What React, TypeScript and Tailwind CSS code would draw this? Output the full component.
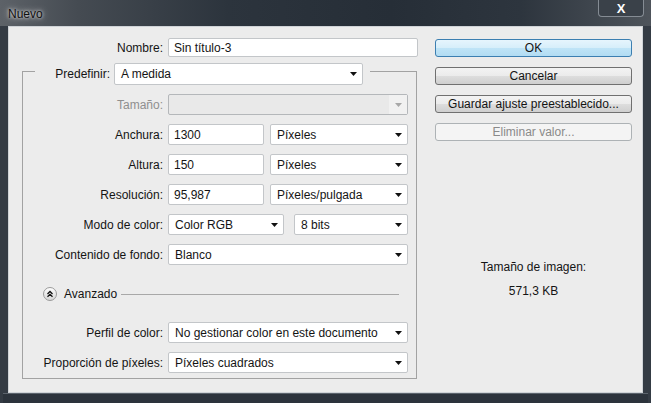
import React from "react";

const Arrow = ({ disabled }: { disabled?: boolean }) => (
  <svg width="7" height="4" viewBox="0 0 7 4" className="flex-none">
    <path d="M0 0 L7 0 L3.5 4 Z" fill={disabled ? "#a8a8a8" : "#111"} />
  </svg>
);

const Select = ({ text, w }: { text: string; w: string }) => (
  <div className={`${w} h-[21px] flex-none flex items-center justify-between bg-white border border-[#c3c6c9] rounded-[2px] pl-[6px] pr-[5px]`}>
    <span>{text}</span>
    <Arrow />
  </div>
);

const Input = ({ text, w }: { text: string; w: string }) => (
  <div className={`${w} h-[21px] flex-none flex items-center bg-white border border-[#c3c6c9] rounded-[2px] pl-[5px]`}>
    <span>{text}</span>
  </div>
);

const Row = ({ label, children, disabled, mt = "mt-[9px]" }: { label: string; children: React.ReactNode; disabled?: boolean; mt?: string }) => (
  <div className={`flex items-center gap-[5px] h-[21px] ${mt}`}>
    <div className={`w-[140px] text-right ${disabled ? "text-[#8f8f8f]" : ""}`}>{label}</div>
    {children}
  </div>
);

const Btn = ({ text, kind }: { text: string; kind: "ok" | "normal" | "disabled" }) => {
  const cls =
    kind === "ok"
      ? "bg-[linear-gradient(#e6f5fd_0%,#d6eefa_50%,#bfe4f7_51%,#b2dcf3_100%)] border-[#3c7fb1]"
      : kind === "normal"
      ? "bg-[linear-gradient(#f3f3f3_0%,#ebebeb_50%,#dddddd_51%,#cfcfcf_100%)] border-[#707070]"
      : "bg-[#f4f4f4] border-[#adb2b5] text-[#8a8a8a]";
  return (
    <div className={`h-[18px] w-[197px] flex items-center justify-center border rounded-[3px] ${cls}`}>{text}</div>
  );
};

export default function App() {
  return (
    <div
      className="w-[651px] h-[403px] flex flex-col bg-[#343b44] text-[12px] leading-none text-[#141414] overflow-hidden"
      style={{ fontFamily: '"Liberation Sans", Arial, sans-serif' }}
    >
      {/* title bar */}
      <div className="h-[26px] flex-none flex items-start bg-[linear-gradient(90deg,#5d6268_0%,#454b52_12%,#2c343d_35%,#262e37_60%,#2d353e_80%,#4e545b_100%)]">
        <div className="ml-[8px] mt-[8px] text-[12px] text-[#101010] [text-shadow:0_0_6px_rgba(235,235,235,0.9),0_0_3px_rgba(235,235,235,0.9)]">
          Nuevo
        </div>
        <div className="ml-auto mr-[7px] w-[46px] h-[17px] border border-t-0 border-[#858c94] rounded-b-[4px] bg-[#3a4149] flex items-center justify-center text-white font-bold text-[13px]">
          X
        </div>
      </div>

      {/* content */}
      <div className="mx-[8px] h-[367px] flex-none flex bg-[#ececec] border border-[#cfd3d7]">
        {/* left column */}
        <div className="w-[409px] flex-none pl-[13px] pt-[11px] flex flex-col">
          <div className="flex items-center gap-[5px] h-[19px]">
            <div className="w-[141px] text-right">Nombre:</div>
            <div className="w-[250px] h-[19px] flex items-center bg-white border border-[#c3c6c9] rounded-[2px] pl-[5px]">
              Sin título-3
            </div>
          </div>

          <div className="w-[395px] mt-[14px] border border-[#a2a2a2] flex flex-col pb-[5px]">
            <div className="-mt-[9px] ml-[12px] self-start flex items-center gap-[4px] bg-[#ececec] pr-[7px]">
              <div className="w-[75px] text-right">Predefinir:</div>
              <div className="w-[249px] h-[22px] flex items-center justify-between bg-white border border-[#c3c6c9] rounded-[2px] pl-[6px] pr-[5px]">
                <span>A medida</span>
                <Arrow />
              </div>
            </div>

            <Row label="Tamaño:" disabled>
              <div className="w-[240px] h-[21px] flex-none flex items-center justify-end bg-[#e9e9e9] border border-[#b4b7ba] rounded-[2px]">
                <div className="w-[18px] h-full flex items-center justify-center bg-[#f1f1f1]">
                  <Arrow disabled />
                </div>
              </div>
            </Row>
            <Row label="Anchura:">
              <div className="flex gap-[6px]">
                <Input text="1300" w="w-[96px]" />
                <Select text="Píxeles" w="w-[138px]" />
              </div>
            </Row>
            <Row label="Altura:">
              <div className="flex gap-[6px]">
                <Input text="150" w="w-[96px]" />
                <Select text="Píxeles" w="w-[138px]" />
              </div>
            </Row>
            <Row label="Resolución:">
              <div className="flex gap-[6px]">
                <Input text="95,987" w="w-[96px]" />
                <Select text="Píxeles/pulgada" w="w-[138px]" />
              </div>
            </Row>
            <Row label="Modo de color:">
              <div className="flex gap-[10px]">
                <Select text="Color RGB" w="w-[116px]" />
                <Select text="8 bits" w="w-[114px]" />
              </div>
            </Row>
            <Row label="Contenido de fondo:">
              <Select text="Blanco" w="w-[240px]" />
            </Row>

            <div className="mt-[22px] ml-[20px] mr-[17px] h-[14px] flex items-center">
              <svg width="14" height="14" viewBox="0 0 14 14" className="flex-none">
                <defs>
                  <linearGradient id="cg" x1="0" y1="0" x2="0" y2="1">
                    <stop offset="0" stopColor="#ffffff" />
                    <stop offset="1" stopColor="#d6d6d6" />
                  </linearGradient>
                </defs>
                <circle cx="7" cy="7" r="6.5" fill="url(#cg)" stroke="#9a9a9a" />
                <path d="M4.5 7 L7 4.5 L9.5 7 M4.5 9.8 L7 7.3 L9.5 9.8" fill="none" stroke="#111" strokeWidth="1.3" />
              </svg>
              <span className="ml-[7px]">Avanzado</span>
              <div className="flex-1 ml-[4px] h-px bg-[#a8a8a8]" />
            </div>

            <Row label="Perfil de color:" mt="mt-[21px]">
              <Select text="No gestionar color en este documento" w="w-[240px]" />
            </Row>
            <Row label="Proporción de píxeles:">
              <Select text="Píxeles cuadrados" w="w-[240px]" />
            </Row>
          </div>
        </div>

        {/* right column */}
        <div className="w-[197px] flex-none ml-[17px] pt-[12px] flex flex-col items-center">
          <div className="flex flex-col gap-[10px]">
            <Btn text="OK" kind="ok" />
            <Btn text="Cancelar" kind="normal" />
            <Btn text="Guardar ajuste preestablecido..." kind="normal" />
            <Btn text="Eliminar valor..." kind="disabled" />
          </div>
          <div className="mt-[118px] leading-[16px]">Tamaño de imagen:</div>
          <div className="mt-[8px] leading-[16px]">571,3 KB</div>
        </div>
      </div>

      <div className="flex-1 mx-[3px] border-t border-[#5b636c] bg-[#2c333c]" />
    </div>
  );
}
